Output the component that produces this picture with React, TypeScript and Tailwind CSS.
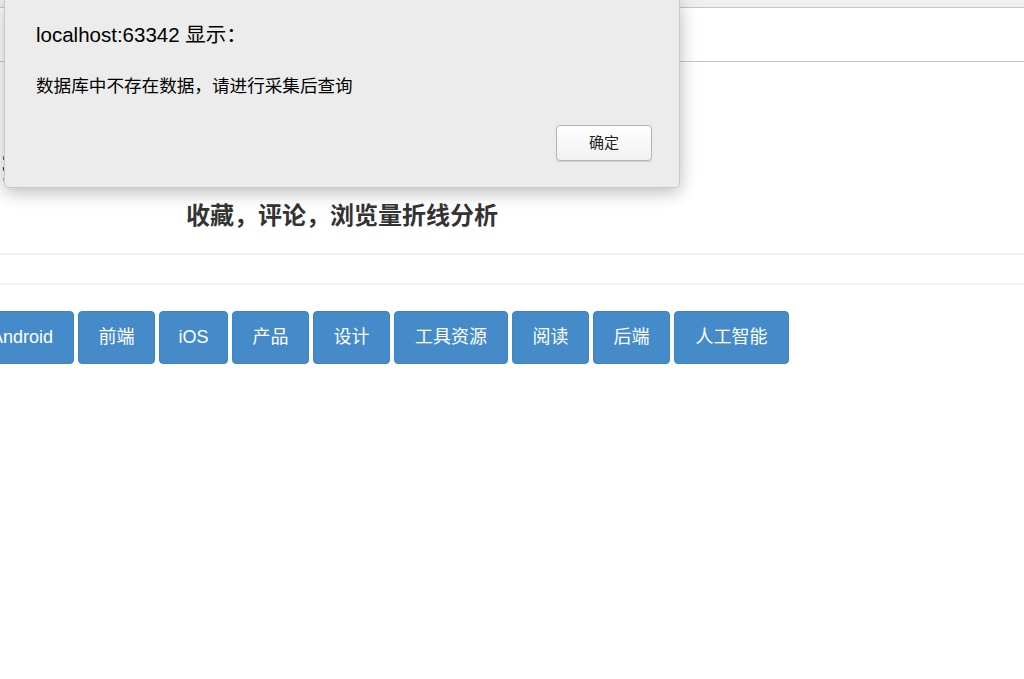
import React from "react";

const cats: { t: string; w?: number }[] = [
  { t: "Android" },
  { t: "前端", w: 77 },
  { t: "iOS", w: 69 },
  { t: "产品", w: 77 },
  { t: "设计", w: 77 },
  { t: "工具资源", w: 114 },
  { t: "阅读", w: 77 },
  { t: "后端", w: 77 },
  { t: "人工智能", w: 115 },
];

export default function App() {
  const font = { fontFamily: '"Liberation Sans", "Noto Sans CJK SC", sans-serif' };
  return (
    <div className="relative w-[1024px] h-[679px] overflow-hidden bg-white" style={font}>
      {/* top browser-ish bar */}
      <div className="h-[8px] bg-[#efefef] border-b border-[#c6c6c6]" />
      <div className="h-[54px] bg-white border-b border-[#c6c6c6]" />

      {/* page content */}
      <div className="w-[684px] text-center">
        <h1 className="mt-[85px] text-[34px] leading-[40px] font-bold text-[#222] whitespace-nowrap">
          掘金社区文章数据采集与分析可视化系统平台
        </h1>
        <h2 className="mt-[13px] text-[24px] leading-[32px] font-semibold text-[#333]">
          收藏，评论，浏览量折线分析
        </h2>
      </div>
      <div className="mt-[21px] h-[2px] bg-[#f0f0f0]" />
      <div className="mt-[28px] h-[2px] bg-[#f0f0f0]" />

      <div className="mt-[26px] -ml-[30px] flex gap-[4px]">
        {cats.map((c) =>
          c.t === "Android" ? (
            <div
              key={c.t}
              className="h-[53px] px-[20px] flex items-center justify-center rounded-[4px] bg-[#458bc9] border border-[#3f84c2] text-white text-[18px] whitespace-nowrap"
            >
              {c.t}
            </div>
          ) : (
            <div
              key={c.t}
              className={
                "h-[53px] flex items-center justify-center rounded-[4px] bg-[#458bc9] border border-[#3f84c2] text-white text-[18px] whitespace-nowrap " +
                (c.w === 69 ? "w-[69px]" : c.w === 114 ? "w-[114px]" : c.w === 115 ? "w-[115px]" : "w-[77px]")
              }
            >
              {c.t}
            </div>
          )
        )}
      </div>

      {/* alert dialog */}
      <div className="absolute top-0 left-[4px] w-[676px] h-[188px] bg-[#ececec] border border-t-0 border-[#c9c9c9] rounded-b-[5px] shadow-[0_4px_18px_rgba(0,0,0,0.28)]">
        <div className="pl-[31px] pt-[22px] text-[20.5px] leading-[26px] text-black whitespace-nowrap">
          localhost:63342 显示：
        </div>
        <div className="pl-[31px] mt-[27px] text-[17.6px] leading-[22px] text-black whitespace-nowrap">
          数据库中不存在数据，请进行采集后查询
        </div>
        <div className="flex justify-end pr-[27px] mt-[28px]">
          <div className="w-[96px] h-[36px] flex items-center justify-center rounded-[4px] border border-[#b4b4b4] bg-gradient-to-b from-white to-[#f1f1f1] shadow-[0_1px_1px_rgba(0,0,0,0.12)] text-[15px] text-[#222]">
            确定
          </div>
        </div>
      </div>
    </div>
  );
}
